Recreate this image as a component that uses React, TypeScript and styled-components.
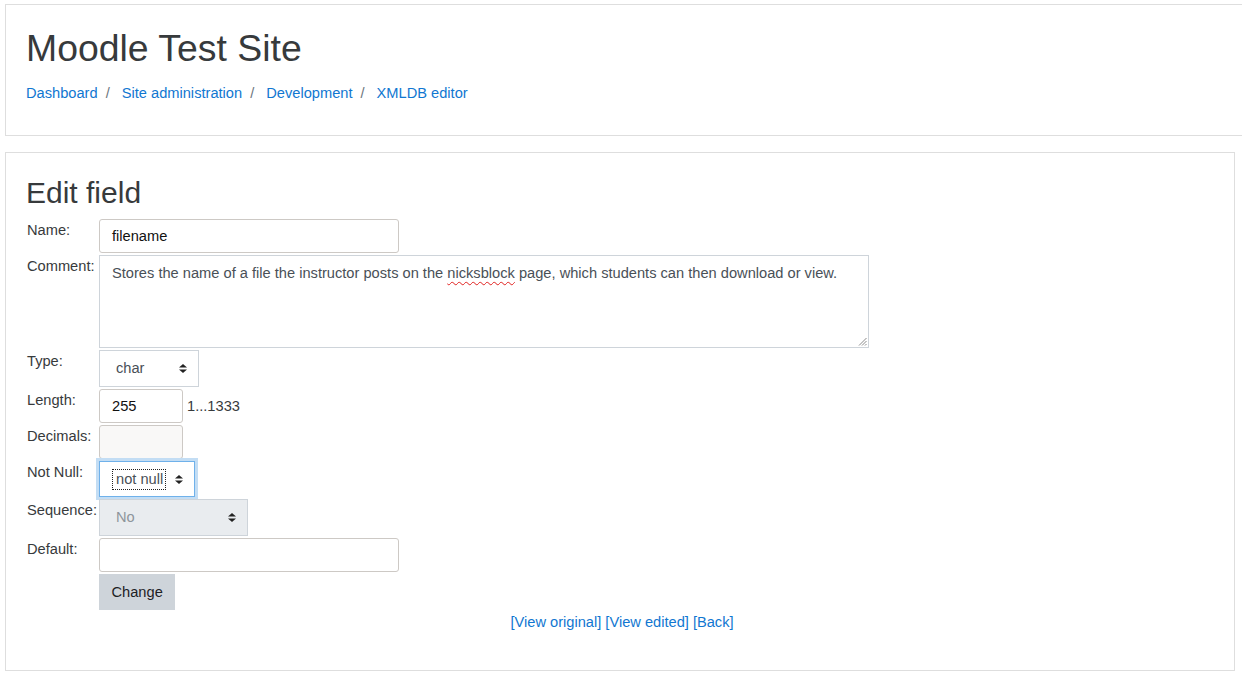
import React from "react";
import styled, { createGlobalStyle } from "styled-components";

const GlobalStyle = createGlobalStyle`
  html, body {
    margin: 0;
    padding: 0;
    background: #fff;
    overflow: hidden;
  }
  body {
    font-family: "Liberation Sans", Arial, sans-serif;
    font-size: 14.65px;
    line-height: 22.5px;
    color: #373a3c;
  }
`;

const Page = styled.div`
  display: flex;
  flex-direction: column;
  gap: 16px;
  padding: 4px 0 0 5px;
`;

const HeaderCard = styled.header`
  width: 1250px;
  border: 1px solid #dedede;
  padding: 21px 20px 31px;
  box-sizing: border-box;
`;

const SiteTitle = styled.h1`
  margin: 0 0 11px;
  font-size: 37.4px;
  font-weight: 400;
  line-height: 1.2;
  color: #373a3c;
`;

const Crumbs = styled.nav`
  display: flex;
  align-items: center;
`;

const Link = styled.a`
  color: #1177d1;
  text-decoration: none;
`;

const Sep = styled.span`
  color: #6c757d;
  padding: 0 12px 0 8px;
`;

const MainCard = styled.main`
  width: 1230px;
  box-sizing: border-box;
  border: 1px solid #dedede;
  padding: 22px 20px 36px;
`;

const Heading = styled.h2`
  margin: 0 0 8px;
  font-size: 30px;
  font-weight: 400;
  line-height: 1.2;
  color: #373a3c;
`;

const FormGrid = styled.div`
  display: grid;
  grid-template-columns: 72px auto;
  row-gap: 2px;
  margin-left: 1px;
  justify-items: start;
`;

const Label = styled.label`
  align-self: start;
  white-space: nowrap;
`;

const Field = styled.div`
  display: flex;
  align-items: center;
  gap: 4px;
`;

const Input = styled.div<{ $w: number; $bg?: string }>`
  box-sizing: border-box;
  width: ${(p) => p.$w}px;
  height: 34px;
  border: 1px solid #cdc9c5;
  border-radius: 3px;
  background: ${(p) => p.$bg ?? "#fff"};
  padding: 0 12px;
  display: flex;
  align-items: center;
  color: #111;
`;

const TextArea = styled.div`
  position: relative;
  box-sizing: border-box;
  width: 770px;
  height: 93px;
  border: 1px solid #ced4da;
  padding: 6px 12px;
  color: #495057;
`;

const Misspelled = styled.span`
  text-decoration: underline wavy #e0201e;
  text-decoration-thickness: 1px;
  text-underline-offset: 3px;
`;

const Grip = styled.svg`
  position: absolute;
  right: 1px;
  bottom: 1px;
`;

const Select = styled.div<{ $w: number; $h: number; $disabled?: boolean; $focused?: boolean }>`
  box-sizing: border-box;
  width: ${(p) => p.$w}px;
  height: ${(p) => p.$h}px;
  border: 1px solid ${(p) => (p.$focused ? "#6fb1ea" : "#ced4da")};
  box-shadow: ${(p) => (p.$focused ? "0 0 0 3px #c3ddf4" : "none")};
  background: ${(p) => (p.$disabled ? "#e9ecef" : "#fff")};
  color: ${(p) => (p.$disabled ? "#8e959b" : "#495057")};
  display: flex;
  align-items: center;
  justify-content: space-between;
  padding: 0 11px 0 12px;
`;

const SelectText = styled.span<{ $focused?: boolean }>`
  outline: ${(p) => (p.$focused ? "1px dotted #222" : "none")};
  outline-offset: -1px;
  padding: 0 3px 0 4px;
  line-height: 21px;
  white-space: nowrap;
`;

const Hint = styled.span`
  color: #373a3c;
`;

const Button = styled.button`
  height: 36px;
  padding: 0 12.5px;
  border: none;
  background: #ced4da;
  color: #1d2125;
  font: inherit;
  cursor: pointer;
`;

const Footer = styled.div`
  display: flex;
  justify-content: center;
  gap: 4px;
  margin-top: 1px;
  padding-left: 4px;
`;

function Caret() {
  return (
    <svg width="8" height="9" viewBox="0 0 8 9">
      <path d="M4 0 L8 3.6 L0 3.6 Z" fill="#222" />
      <path d="M4 9 L8 5.4 L0 5.4 Z" fill="#222" />
    </svg>
  );
}

function FakeSelect({
  value,
  w,
  h,
  disabled,
  focused,
}: {
  value: string;
  w: number;
  h: number;
  disabled?: boolean;
  focused?: boolean;
}) {
  return (
    <Select $w={w} $h={h} $disabled={disabled} $focused={focused}>
      <SelectText $focused={focused}>{value}</SelectText>
      <Caret />
    </Select>
  );
}

export default function App() {
  return (
    <>
      <GlobalStyle />
      <Page>
        <HeaderCard>
          <SiteTitle>Moodle Test Site</SiteTitle>
          <Crumbs>
            <Link href="#">Dashboard</Link>
            <Sep>/</Sep>
            <Link href="#">Site administration</Link>
            <Sep>/</Sep>
            <Link href="#">Development</Link>
            <Sep>/</Sep>
            <Link href="#">XMLDB editor</Link>
          </Crumbs>
        </HeaderCard>

        <MainCard>
          <Heading>Edit field</Heading>
          <FormGrid>
            <Label>Name:</Label>
            <Input $w={300}>filename</Input>

            <Label>Comment:</Label>
            <TextArea>
              Stores the name of a file the instructor posts on the{" "}
              <Misspelled>nicksblock</Misspelled> page, which students can then
              download or view.
              <Grip width="9" height="9" viewBox="0 0 9 9">
                <path d="M8.5 1 L1 8.5 M8.5 4 L4 8.5 M8.5 7 L7 8.5" stroke="#8a8a8a" strokeWidth="1" />
              </Grip>
            </TextArea>

            <Label>Type:</Label>
            <FakeSelect value="char" w={100} h={37} />

            <Label>Length:</Label>
            <Field>
              <Input $w={84}>255</Input>
              <Hint>1...1333</Hint>
            </Field>

            <Label>Decimals:</Label>
            <Input $w={84} $bg="#f9f8f7" />

            <Label>Not Null:</Label>
            <FakeSelect value="not null" w={96} h={36} focused />

            <Label>Sequence:</Label>
            <FakeSelect value="No" w={149} h={37} disabled />

            <Label>Default:</Label>
            <Input $w={300} />

            <span />
            <Button>Change</Button>
          </FormGrid>
          <Footer>
            <Link href="#">[View original]</Link>
            <Link href="#">[View edited]</Link>
            <Link href="#">[Back]</Link>
          </Footer>
        </MainCard>
      </Page>
    </>
  );
}
